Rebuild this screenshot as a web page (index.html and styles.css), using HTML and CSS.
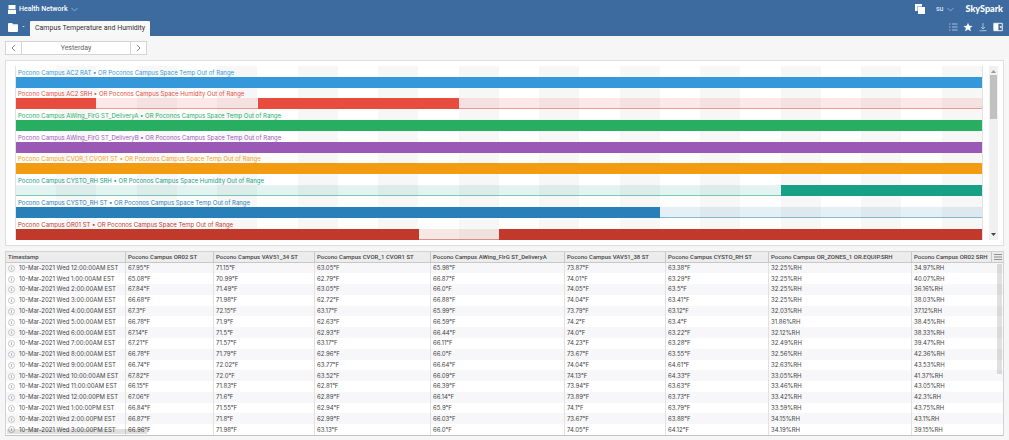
FILE: index.html
```html
<!DOCTYPE html>
<html lang="en">
<head>
<meta charset="utf-8">
<title>Campus Temperature and Humidity</title>
<link rel="stylesheet" href="styles.css">
</head>
<body>
<header class="top">
  <div class="bar">
    <button class="menu">
      <svg class="site-icon" viewBox="0 0 8 9"><path fill="#fff" d="M.5 0h7v4h-7zM0 4.800h8V9H0z"/></svg>
      <span class="site">Health Network</span>
      <svg class="chev" viewBox="0 0 7 5"><path d="M.5 1l3 3 3-3"/></svg>
    </button>
    <div class="right">
      <button class="copy" aria-label="Windows"><svg class="copy-icon" viewBox="0 0 10 10"><path fill="#fff" d="M0 0h7v2H2v5H0z"/><path fill="#fff" d="M3 3h7v7H3z"/><path fill="#a9c0da" d="M2 2h5v1H3v4H2z"/></svg></button>
      <button class="user">su <svg class="chev" viewBox="0 0 7 5"><path d="M.5 1l3 3 3-3"/></svg></button>
      <span class="logo">SkySpark</span>
    </div>
  </div>
  <div class="bar tabs">
    <button class="folder" aria-label="Views"><svg class="folder-icon" viewBox="0 0 10 9"><path fill="#fff" d="M0 1q0-1 1-1h3l1 1h4q1 0 1 1v6q0 1-1 1H1Q0 9 0 8z"/><path stroke="#8eabcb" stroke-width=".5" d="M4.500 1.700H10"/></svg><svg class="dot" viewBox="0 0 4 3"><path fill="#d5e0ec" d="M0 0h4L2 2z"/></svg></button>
    <a class="tab" href="#">Campus Temperature and Humidity</a>
    <div class="tools">
      <button aria-label="List"><svg class="tool" viewBox="0 0 10 10"><path stroke="#c6d5e6" stroke-width=".8" d="M1 2h1.500M4 2h5.500M1 5h1.500M4 5h5.500M1 8h1.500M4 8h5.500"/></svg></button>
      <button aria-label="Favorite"><svg class="tool" viewBox="0 0 10 10"><path fill="#fff" d="M5 .7l1.300 3 3.300.3-2.500 2.100.8 3.200L5 7.600 2.100 9.300l.8-3.200L.4 4l3.300-.3z"/></svg></button>
      <button aria-label="Download"><svg class="tool" viewBox="0 0 10 10"><path fill="none" stroke="#c6d5e6" stroke-width=".8" d="M5 1v6M3 5l2 2 2-2M1.500 8.700h7"/></svg></button>
      <button aria-label="Side panel"><svg class="tool" viewBox="0 0 10 10"><path fill="none" stroke="#fff" stroke-width=".9" d="M.8 1.300h8.500v7.400H.8z"/><path fill="#fff" d="M1 1.500h4.400v7H1zM8.400 3.400v3.200L6.500 5z"/></svg></button>
    </div>
  </div>
</header>
<main>
  <div class="dates">
    <button class="step" aria-label="Previous"><svg class="arrow" viewBox="0 0 5 8"><path d="M4 1L1 4l3 3"/></svg></button>
    <button class="range">Yesterday</button>
    <button class="step" aria-label="Next"><svg class="arrow" viewBox="0 0 5 8"><path d="M1 1l3 3-3 3"/></svg></button>
  </div>
  <section class="panel chart">
    <div class="plot">
      <div class="row c1"><span>Pocono Campus AC2 RAT • OR Poconos Campus Space Temp Out of Range</span><div class="track"><i style="left:0%;width:100%"></i></div></div>
      <div class="row c2"><span>Pocono Campus AC2 SRH • OR Poconos Campus Space Humidity Out of Range</span><div class="track"><i style="left:0%;width:8.333%"></i><i style="left:25%;width:20.833%"></i></div></div>
      <div class="row c3"><span>Pocono Campus AWing_FlrG ST_DeliveryA • OR Poconos Campus Space Temp Out of Range</span><div class="track"><i style="left:0%;width:100%"></i></div></div>
      <div class="row c4"><span>Pocono Campus AWing_FlrG ST_DeliveryB • OR Poconos Campus Space Temp Out of Range</span><div class="track"><i style="left:0%;width:100%"></i></div></div>
      <div class="row c5"><span>Pocono Campus CVOR_1 CVOR1 ST • OR Poconos Campus Space Temp Out of Range</span><div class="track"><i style="left:0%;width:100%"></i></div></div>
      <div class="row c6"><span>Pocono Campus CYSTO_RH SRH • OR Poconos Campus Space Humidity Out of Range</span><div class="track"><i style="left:79.167%;width:20.833%"></i></div></div>
      <div class="row c7"><span>Pocono Campus CYSTO_RH ST • OR Poconos Campus Space Temp Out of Range</span><div class="track"><i style="left:0%;width:66.667%"></i></div></div>
      <div class="row c8"><span>Pocono Campus OR01 ST • OR Poconos Campus Space Temp Out of Range</span><div class="track"><i style="left:0%;width:41.667%"></i><i style="left:50%;width:50%"></i></div></div>
    </div>
    <div class="scroll">
      <svg class="sarrow" viewBox="0 0 5 3"><path fill="#999" d="M0 3h5L2.500 0z"/></svg>
      <div class="rail"><div class="thumb"></div></div>
      <svg class="sarrow" viewBox="0 0 5 3"><path fill="#444" d="M0 0h5L2.500 3z"/></svg>
    </div>
  </section>
  <section class="panel data">
    <table>
      <colgroup><col class="w1"><col class="w2"><col class="w3"><col class="w4"><col class="w5"><col class="w6"><col class="w7"><col class="w8"><col class="w9"></colgroup>
      <thead><tr><th>Timestamp</th><th>Pocono Campus OR02 ST</th><th>Pocono Campus VAV51_34 ST</th><th>Pocono Campus CVOR_1 CVOR1 ST</th><th>Pocono Campus AWing_FlrG ST_DeliveryA</th><th>Pocono Campus VAV51_38 ST</th><th>Pocono Campus CYSTO_RH ST</th><th>Pocono Campus OR_ZONES_1 OR.EQUIP.SRH</th><th>Pocono Campus OR02 SRH</th></tr></thead>
      <tbody>
        <tr><td><button class="info" aria-label="Info"></button>10-Mar-2021 Wed 12:00:00AM EST</td><td>67.95°F</td><td>71.15°F</td><td>63.05°F</td><td>65.98°F</td><td>73.87°F</td><td>63.38°F</td><td>32.25%RH</td><td>34.97%RH</td></tr>
        <tr><td><button class="info" aria-label="Info"></button>10-Mar-2021 Wed 1:00:00AM EST</td><td>65.08°F</td><td>70.99°F</td><td>62.79°F</td><td>66.87°F</td><td>74.01°F</td><td>63.29°F</td><td>32.25%RH</td><td>40.07%RH</td></tr>
        <tr><td><button class="info" aria-label="Info"></button>10-Mar-2021 Wed 2:00:00AM EST</td><td>67.84°F</td><td>71.49°F</td><td>63.05°F</td><td>66.0°F</td><td>74.05°F</td><td>63.5°F</td><td>32.25%RH</td><td>36.16%RH</td></tr>
        <tr><td><button class="info" aria-label="Info"></button>10-Mar-2021 Wed 3:00:00AM EST</td><td>66.68°F</td><td>71.98°F</td><td>62.72°F</td><td>66.88°F</td><td>74.04°F</td><td>63.41°F</td><td>32.25%RH</td><td>38.03%RH</td></tr>
        <tr><td><button class="info" aria-label="Info"></button>10-Mar-2021 Wed 4:00:00AM EST</td><td>67.3°F</td><td>72.15°F</td><td>63.17°F</td><td>65.99°F</td><td>73.79°F</td><td>63.12°F</td><td>32.03%RH</td><td>37.12%RH</td></tr>
        <tr><td><button class="info" aria-label="Info"></button>10-Mar-2021 Wed 5:00:00AM EST</td><td>66.78°F</td><td>71.9°F</td><td>62.63°F</td><td>66.59°F</td><td>74.2°F</td><td>63.4°F</td><td>31.86%RH</td><td>38.45%RH</td></tr>
        <tr><td><button class="info" aria-label="Info"></button>10-Mar-2021 Wed 6:00:00AM EST</td><td>67.14°F</td><td>71.5°F</td><td>62.93°F</td><td>66.44°F</td><td>74.0°F</td><td>63.22°F</td><td>32.12%RH</td><td>38.33%RH</td></tr>
        <tr><td><button class="info" aria-label="Info"></button>10-Mar-2021 Wed 7:00:00AM EST</td><td>67.21°F</td><td>71.57°F</td><td>63.17°F</td><td>66.11°F</td><td>74.23°F</td><td>63.28°F</td><td>32.49%RH</td><td>39.47%RH</td></tr>
        <tr><td><button class="info" aria-label="Info"></button>10-Mar-2021 Wed 8:00:00AM EST</td><td>66.78°F</td><td>71.79°F</td><td>62.96°F</td><td>66.0°F</td><td>73.67°F</td><td>63.55°F</td><td>32.56%RH</td><td>42.36%RH</td></tr>
        <tr><td><button class="info" aria-label="Info"></button>10-Mar-2021 Wed 9:00:00AM EST</td><td>66.74°F</td><td>72.02°F</td><td>63.77°F</td><td>66.64°F</td><td>74.04°F</td><td>64.61°F</td><td>32.63%RH</td><td>43.53%RH</td></tr>
        <tr><td><button class="info" aria-label="Info"></button>10-Mar-2021 Wed 10:00:00AM EST</td><td>67.82°F</td><td>72.0°F</td><td>63.52°F</td><td>66.09°F</td><td>74.13°F</td><td>64.33°F</td><td>33.05%RH</td><td>41.37%RH</td></tr>
        <tr><td><button class="info" aria-label="Info"></button>10-Mar-2021 Wed 11:00:00AM EST</td><td>66.15°F</td><td>71.83°F</td><td>62.81°F</td><td>66.39°F</td><td>73.94°F</td><td>63.63°F</td><td>33.46%RH</td><td>43.05%RH</td></tr>
        <tr><td><button class="info" aria-label="Info"></button>10-Mar-2021 Wed 12:00:00PM EST</td><td>67.06°F</td><td>71.6°F</td><td>62.89°F</td><td>66.14°F</td><td>73.89°F</td><td>63.73°F</td><td>33.42%RH</td><td>42.3%RH</td></tr>
        <tr><td><button class="info" aria-label="Info"></button>10-Mar-2021 Wed 1:00:00PM EST</td><td>66.84°F</td><td>71.55°F</td><td>62.94°F</td><td>65.9°F</td><td>74.1°F</td><td>63.79°F</td><td>33.59%RH</td><td>43.75%RH</td></tr>
        <tr><td><button class="info" aria-label="Info"></button>10-Mar-2021 Wed 2:00:00PM EST</td><td>66.87°F</td><td>71.8°F</td><td>62.99°F</td><td>66.03°F</td><td>73.67°F</td><td>63.88°F</td><td>34.15%RH</td><td>43.1%RH</td></tr>
        <tr><td><button class="info" aria-label="Info"></button>10-Mar-2021 Wed 3:00:00PM EST</td><td>66.96°F</td><td>71.98°F</td><td>63.13°F</td><td>66.0°F</td><td>74.05°F</td><td>64.12°F</td><td>34.19%RH</td><td>39.15%RH</td></tr>
      </tbody>
    </table>
    <button class="cols" aria-label="Columns"><svg class="cols-icon" viewBox="0 0 8 8"><path stroke="#777" stroke-width=".8" d="M0 1.500h8M0 4h8M0 6.500h8"/></svg></button>
    <div class="vbar"></div>
    <div class="hbar"></div>
  </section>
</main>
</body>
</html>
```

FILE: styles.css
```css
* { box-sizing: border-box; }
body {
  margin: 0;
  min-height: 100vh;
  display: flex;
  flex-direction: column;
  background: #f6f6f7;
  color: #444;
  font-family: Roboto, "Liberation Sans", sans-serif;
  font-size: 7px;
  line-height: 10px;
}
button {
  margin: 0;
  padding: 0;
  border: 0;
  background: none;
  color: inherit;
  font: inherit;
  display: flex;
  align-items: center;
}
svg { display: block; flex: none; }

.top { background: #3d6b9f; color: #fff; }
.bar {
  display: flex;
  align-items: center;
  justify-content: space-between;
  height: 18px;
  padding: 0 6px 0 8px;
}
.menu { gap: 3px; }
.site-icon { width: 8px; height: 9px; }
.site { font-weight: 500; }
.chev { width: 7px; height: 5px; fill: none; stroke: #8fadcd; stroke-width: 1; }
.right { display: flex; align-items: center; gap: 11px; }
.copy-icon { width: 10px; height: 10px; }
.user { gap: 4px; font-weight: 500; color: #d5e0ec; }
.logo { font-family: Lato, sans-serif; font-weight: 900; font-size: 9px; }

.tabs { justify-content: flex-start; align-items: flex-end; }
.folder { align-self: center; gap: 4px; margin-right: 5px; }
.folder-icon { width: 10px; height: 9px; }
.dot { width: 3px; height: 2px; }
.tab {
  height: 15px;
  padding: 0 5px;
  border-radius: 1px 1px 0 0;
  background: #f8f8f8;
  color: #333;
  text-decoration: none;
  line-height: 14px;
}
.tools { display: flex; gap: 5px; margin-left: auto; align-self: center; }
.tool { width: 10px; height: 10px; }

main {
  flex: 1;
  display: flex;
  flex-direction: column;
  gap: 5px;
  padding: 5px 5px 4px;
}
.dates {
  align-self: flex-start;
  display: flex;
  height: 14px;
  border: 1px solid #d4d4d4;
  background: #fff;
  color: #666;
}
.step { width: 15px; justify-content: center; }
.arrow { width: 5px; height: 8px; fill: none; stroke: #888; }
.range {
  width: 110px;
  justify-content: center;
  border: solid #d4d4d4;
  border-width: 0 1px;
}
.panel {
  flex: 1 1 20px;
  border: 1px solid #dedede;
  background: #fff;
  font-family: Inter, Roboto, sans-serif;
  font-size: 6px;
}

.chart { display: flex; gap: 6px; padding: 5px 5px 5px 9px; }
.plot {
  flex: 1;
  display: grid;
  grid-template-rows: repeat(8, 1fr);
  border: solid #e2e2e2;
  border-width: 0 1px;
  background: repeating-linear-gradient(90deg, transparent 0 4.1667%, #f7f7f8 4.1667% 8.3333%);
}
.row { display: flex; flex-direction: column; color: var(--c); }
.row span { flex: 1; align-content: end; padding: 0 2px; line-height: 8px; white-space: nowrap; }
.track {
  position: relative;
  height: 11px;
  background: color-mix(in srgb, var(--c) 12%, transparent);
  border-bottom: 1px solid color-mix(in srgb, var(--c) 50%, transparent);
}
.track i { position: absolute; top: 0; height: 11px; background: var(--c); }
.c1 { --c: #3498db; }
.c2 { --c: #e74c3c; }
.c3 { --c: #27ae60; }
.c4 { --c: #9b59b6; }
.c5 { --c: #f39c12; }
.c6 { --c: #16a085; }
.c7 { --c: #2980b9; }
.c8 { --c: #c0392b; }
.scroll {
  width: 9px;
  display: flex;
  flex-direction: column;
  align-items: center;
  padding: 4px 0;
  background: #f1f1f1;
}
.sarrow { width: 5px; height: 3px; }
.rail { flex: 1; width: 7px; padding: 2px 0; }
.thumb { height: 28%; background: #c1c1c1; }

.data { position: relative; display: flex; border-color: #d2d2d2; border-bottom-color: #c4c4c4; }
table { width: 100%; table-layout: fixed; border-collapse: separate; border-spacing: 0; }
.w1 { width: 120px; }
.w2 { width: 88px; }
.w3 { width: 101px; }
.w4 { width: 116px; }
.w5 { width: 134px; }
.w6 { width: 101px; }
.w7 { width: 103px; }
.w8 { width: 143px; }
.w9 { width: 91px; }
th, td {
  padding: 0 2px;
  text-align: left;
  white-space: nowrap;
  border-right: 1px solid #e2e2e2;
}
th {
  height: 11px;
  background: #ececec;
  border-right-color: #c8c8c8;
  border-bottom: 1px solid #c8c8c8;
  font-family: Roboto, sans-serif;
  font-weight: 500;
}
th:last-child, td:last-child { border-right: 0; }
tbody tr:nth-child(odd) { background: #f7f7f9; }
.info {
  display: inline-block;
  vertical-align: middle;
  width: 7px;
  height: 7px;
  margin-right: 4px;
  border: 1px solid #c4c4c4;
  border-radius: 50%;
  background: linear-gradient(#bbb, #bbb) center / 1px 3px no-repeat;
}
.cols {
  position: absolute;
  top: 0;
  right: 0;
  width: 12px;
  height: 11px;
  justify-content: center;
  border-left: 1px solid #c8c8c8;
  border-bottom: 1px solid #c8c8c8;
  background: #ececec;
}
.cols-icon { width: 8px; height: 8px; }
.vbar { position: absolute; top: 12px; right: 1px; width: 5px; height: 60%; background: rgba(0, 0, 0, .12); }
.hbar { position: absolute; left: 1px; bottom: 1px; width: 14%; height: 5px; background: rgba(0, 0, 0, .12); }
```
